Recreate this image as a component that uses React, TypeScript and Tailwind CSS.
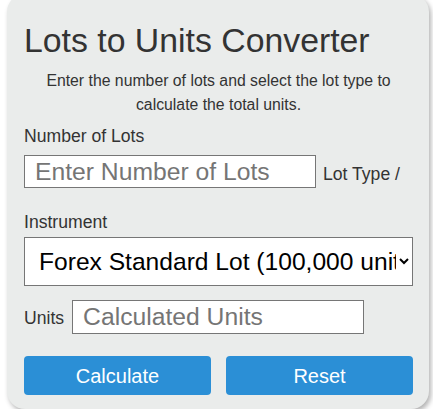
import { useState } from 'react';

export default function App() {
  const [lots, setLots] = useState('');
  const [lotType, setLotType] = useState('100000');
  const [units, setUnits] = useState('');

  const calculate = () => {
    const n = parseFloat(lots);
    if (isNaN(n)) return;
    setUnits(String(n * Number(lotType)));
  };

  const reset = () => {
    setLots('');
    setLotType('100000');
    setUnits('');
  };

  return (
    <div className="min-h-screen bg-white font-['Liberation_Sans',Arial,sans-serif]">
      <div className="ml-[7px] mt-[-6px] w-[422px] rounded-[18px] bg-[#eaeceb] pl-[17px] pr-[16px] pt-[26px] pb-[14px] shadow-[2px_3px_5px_rgba(0,0,0,0.3)]">
        {/* Header */}
        <h1 className="text-[33.8px] leading-[40px] text-[#333]">Lots to Units Converter</h1>
        <p className="mt-[9px] text-center text-[15.8px] leading-[24px] text-[#333]">
          Enter the number of lots and select the lot type to calculate the total units.
        </p>

        {/* Number of lots */}
        <label className="mt-[8px] block text-[17.6px] leading-[22px] text-[#333]">Number of Lots</label>
        <div className="mt-[8px] flex items-center">
          <input
            type="number"
            value={lots}
            onChange={(e) => setLots(e.target.value)}
            placeholder="Enter Number of Lots"
            className="h-[33px] w-[292px] border border-[#767676] bg-white px-[10px] text-[24.7px] leading-[28px] text-black placeholder:text-[#757575]"
          />
          <span className="ml-[7px] pt-[5px] text-[17.6px] leading-[22px] text-[#333]">Lot Type /</span>
        </div>

        {/* Lot type */}
        <label className="mt-[23px] block text-[17.6px] leading-[22px] text-[#333]">Instrument</label>
        <select
          value={lotType}
          onChange={(e) => setLotType(e.target.value)}
          className="mt-[4px] block h-[49px] w-full border border-[#767676] bg-white pl-[10px] text-[24.6px] text-black"
        >
          <option value="100000">Forex Standard Lot (100,000 units)</option>
          <option value="10000">Forex Mini Lot (10,000 units)</option>
          <option value="1000">Forex Micro Lot (1,000 units)</option>
          <option value="100">Forex Nano Lot (100 units)</option>
        </select>

        {/* Result */}
        <div className="mt-[14px] flex items-center">
          <span className="pt-[2px] text-[17.6px] leading-[22px] text-[#333]">Units</span>
          <input
            type="text"
            readOnly
            value={units}
            placeholder="Calculated Units"
            className="ml-[8px] h-[34px] w-[292px] border border-[#767676] bg-white px-[10px] text-[24.7px] leading-[28px] text-black placeholder:text-[#757575]"
          />
        </div>

        {/* Buttons */}
        <div className="mt-[22px] flex gap-[15px]">
          <button
            onClick={calculate}
            className="h-[39px] flex-1 rounded-[4px] bg-[#2b8fd6] text-[20px] text-white"
          >
            Calculate
          </button>
          <button
            onClick={reset}
            className="h-[39px] flex-1 rounded-[4px] bg-[#2b8fd6] text-[20px] text-white"
          >
            Reset
          </button>
        </div>
      </div>
    </div>
  );
}
